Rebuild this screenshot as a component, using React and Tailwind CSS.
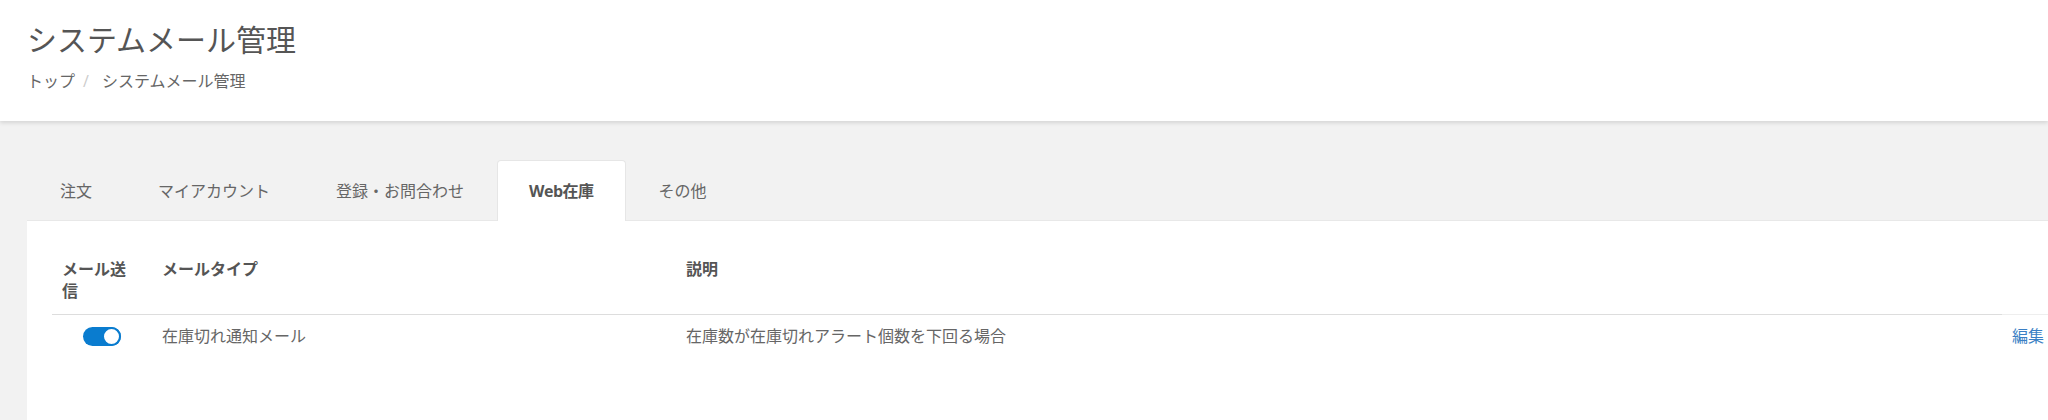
import React, { useState } from 'react';

const tabs = ['注文', 'マイアカウント', '登録・お問合わせ', 'Web在庫', 'その他'];

const mails = [
  { id: 1, enabled: true, type: '在庫切れ通知メール', desc: '在庫数が在庫切れアラート個数を下回る場合' },
];

const Toggle = ({ on, onClick }) => (
  <button
    onClick={onClick}
    className={`relative inline-flex items-center w-[38px] h-[19px] rounded-full ${on ? 'bg-[#0a7ccf]' : 'bg-[#ccc]'}`}
  >
    <span
      className={`absolute top-0 w-[19px] h-[19px] rounded-full bg-white border-2 ${on ? 'right-0 border-[#0a7ccf]' : 'left-0 border-[#ccc]'}`}
    />
  </button>
);

const App = () => {
  const [active, setActive] = useState(3);
  const [rows, setRows] = useState(mails);

  const flip = (id) => setRows(rows.map((r) => (r.id === id ? { ...r, enabled: !r.enabled } : r)));

  return (
    <div className="min-h-screen bg-[#f2f2f2] text-[#555] font-['Open_Sans','Noto_Sans_CJK_JP',sans-serif] overflow-hidden">
      {/* page header */}
      <div className="bg-white px-[27px] pt-[23px] pb-[29px] shadow-[0_2px_4px_rgba(0,0,0,0.12)] relative">
        <h1 className="text-[30px] leading-[33px] font-normal text-[#555]">システムメール管理</h1>
        <div className="mt-[14px] text-[16px] leading-[22px] text-[#666] flex">
          <span>トップ</span>
          <span className="mx-[8px] text-[#ccc]">/</span>
          <span className="ml-[5px]">システムメール管理</span>
        </div>
      </div>

      <div className="pl-[27px] pt-[39px]">
        {/* tabs */}
        <div className="flex h-[60px] relative z-10">
          {tabs.map((t, i) => (
            <button
              key={t}
              onClick={() => setActive(i)}
              className={`h-[61px] text-[16px] leading-[22px] rounded-t-[4px] border border-b-0 ${
                i === active
                  ? 'px-[31px] bg-white border-[#e6e6e6] font-bold text-[#555] tracking-[-0.5px]'
                  : 'px-8 border-transparent text-[#666]'
              }`}
            >
              {t}
            </button>
          ))}
        </div>

        {/* panel */}
        <div className="bg-white border-t border-[#e8e8e8] pl-[25px] pt-[37px] min-h-[200px]">
          <table className="table-fixed w-[2100px] text-[16px] leading-[22px] border-collapse">
            <thead>
              <tr>
                <th className="w-[100px] pl-[10px] pr-[14px] pb-[12px] text-left align-top font-bold text-[#555] border-b border-[#ddd]">
                  メール送信
                </th>
                <th className="w-[524px] px-[10px] pb-[12px] text-left align-top font-bold text-[#555] border-b border-[#ddd]">
                  メールタイプ
                </th>
                <th className="w-[1326px] px-[10px] pb-[12px] text-left align-top font-bold text-[#555] border-b border-[#ddd]">
                  説明
                </th>
                <th className="w-[150px] px-[10px] pb-[12px] border-b border-[#eee]"></th>
              </tr>
            </thead>
            <tbody>
              {rows.map((r) => (
                <tr key={r.id}>
                  <td className="px-[10px] py-[10px] align-middle">
                    <div className="flex justify-center">
                      <Toggle on={r.enabled} onClick={() => flip(r.id)} />
                    </div>
                  </td>
                  <td className="px-[10px] py-[10px] text-[#666]">{r.type}</td>
                  <td className="px-[10px] py-[10px] text-[#666]">{r.desc}</td>
                  <td className="px-[10px] py-[10px] text-left whitespace-nowrap">
                    <a href="#" className="text-[#3a7fc4]">編集</a>
                  </td>
                </tr>
              ))}
            </tbody>
          </table>
        </div>
      </div>
    </div>
  );
};

export default App;
